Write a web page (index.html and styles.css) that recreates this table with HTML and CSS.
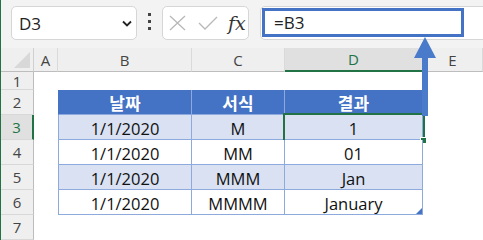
FILE: index.html
```html
<!DOCTYPE html>
<html lang="ko">
<head>
    <meta charset="UTF-8">
    <title>MONTH format</title>
    <link rel="stylesheet" href="styles.css">
</head>
<body>

<div class="app">

    <div class="toolbar">
        <div class="namebox">
            <span>D3</span>
            <svg class="chevron" width="10" height="7" viewBox="0 0 10 7"><polyline points="1,1.5 5,5.5 9,1.5" fill="none" stroke="#222" stroke-width="1.8"/></svg>
        </div>
        <div class="dots"><i></i><i></i><i></i></div>
        <div class="fxbox">
            <svg width="18" height="16" viewBox="0 0 18 16"><path d="M1 1 L16 15 M16 1 L1 15" stroke="#b8b8b8" stroke-width="1.3" fill="none"/></svg>
            <svg width="20" height="16" viewBox="0 0 20 16"><polyline points="1,8 7,14 19,2" stroke="#b8b8b8" stroke-width="1.3" fill="none"/></svg>
            <span class="fx">fx</span>
        </div>
        <div class="formula">
            <span class="formula-text">=B3</span>
        </div>
    </div>

    <div class="sheet">
        <div class="corner"></div>
        <div class="colhead">A</div>
        <div class="colhead">B</div>
        <div class="colhead">C</div>
        <div class="colhead active">D</div>
        <div class="colhead">E</div>

        <div class="rowhead">1</div>
        <div class="blank"></div><div class="blank"></div><div class="blank"></div><div class="blank"></div><div class="blank"></div>

        <div class="rowhead">2</div>
        <div class="blank"></div>
        <div class="cell head first">날짜</div>
        <div class="cell head">서식</div>
        <div class="cell head">결과</div>
        <div class="blank"></div>

        <div class="rowhead active">3</div>
        <div class="blank"></div>
        <div class="cell band first">1/1/2020</div>
        <div class="cell band">M</div>
        <div class="cell band selected">1<span class="sel"></span><span class="handle"></span></div>
        <div class="blank"></div>

        <div class="rowhead">4</div>
        <div class="blank"></div>
        <div class="cell first">1/1/2020</div>
        <div class="cell">MM</div>
        <div class="cell">01</div>
        <div class="blank"></div>

        <div class="rowhead">5</div>
        <div class="blank"></div>
        <div class="cell band first">1/1/2020</div>
        <div class="cell band">MMM</div>
        <div class="cell band">Jan</div>
        <div class="blank"></div>

        <div class="rowhead">6</div>
        <div class="blank"></div>
        <div class="cell first">1/1/2020</div>
        <div class="cell">MMMM</div>
        <div class="cell last">January<span class="resize"></span></div>
        <div class="blank"></div>

        <div class="rowhead">7</div>
        <div class="blank"></div><div class="blank"></div><div class="blank"></div><div class="blank"></div><div class="blank"></div>
    </div>

    <svg class="arrow" width="24" height="82" viewBox="0 0 24 82">
        <polygon points="12,1 1,22 9,22 9,80 15,80 15,22 23,22" fill="#4a7bca"/>
    </svg>

</div>

</body>
</html>
```

FILE: styles.css
```css
html, body {
    margin: 0;
    padding: 0;
    background: #fff;
}

.app {
    position: relative;
    width: 482px;
    height: 240px;
    overflow: hidden;
    border-left: 1px solid #217346;
    font-family: "Open Sans", "Noto Sans", sans-serif;
}

/* formula bar */
.toolbar {
    display: flex;
    align-items: flex-start;
    height: 48px;
    box-sizing: border-box;
    padding-top: 6px;
    background: #f3f3f3;
}

.namebox {
    display: flex;
    align-items: center;
    justify-content: space-between;
    box-sizing: border-box;
    margin-left: 10px;
    width: 126px;
    height: 34px;
    padding: 0 4px 0 7px;
    background: #fff;
    border: 1px solid #d6d6d6;
    border-radius: 5px;
    font-size: 17px;
    color: #222;
}

.dots {
    display: flex;
    flex-direction: column;
    gap: 4px;
    margin: 7px 11px 0 11px;
}

.dots i {
    display: block;
    width: 3px;
    height: 3px;
    background: #444;
}

.fxbox {
    display: flex;
    align-items: center;
    box-sizing: border-box;
    width: 87px;
    height: 34px;
    padding-left: 6px;
    gap: 11px;
    background: #fff;
    border: 1px solid #d6d6d6;
    border-radius: 5px;
}

.fx {
    font-family: "DejaVu Serif", "Liberation Serif", serif;
    font-style: italic;
    font-size: 19px;
    color: #333;
    margin-left: -1px;
}

.formula {
    box-sizing: border-box;
    flex: 1;
    height: 34px;
    margin-left: 11px;
    margin-right: -10px;
    padding: 1px;
    background: #fff;
    border: 1px solid #d6d6d6;
    border-radius: 5px;
}

.formula-text {
    display: flex;
    align-items: center;
    box-sizing: border-box;
    width: 202px;
    height: 29px;
    padding-left: 9px;
    border: 3px solid #4472c4;
    font-size: 17px;
    color: #222;
}

/* grid */
.sheet {
    display: grid;
    grid-template-columns: 33px 24px 134px 93px 138px 1fr;
    grid-template-rows: 24px 18px repeat(6, 25px);
}

.corner {
    position: relative;
    background: #efefef;
    border-right: 1px solid #d0d0d0;
    border-bottom: 1px solid #bdbdbd;
}

.corner::after {
    content: "";
    position: absolute;
    right: 3px;
    bottom: 3px;
    border-style: solid;
    border-width: 0 0 16px 16px;
    border-color: transparent transparent #d8d8d8 transparent;
}

.colhead {
    display: flex;
    align-items: center;
    justify-content: center;
    background: #efefef;
    border-right: 1px solid #dadada;
    border-bottom: 1px solid #bdbdbd;
    font-size: 15px;
    color: #444;
}

.colhead.active {
    background: #e0e0e0;
    color: #217346;
    border-bottom: 2px solid #217346;
}

.rowhead {
    display: flex;
    align-items: center;
    justify-content: center;
    background: #efefef;
    border-right: 1px solid #bdbdbd;
    border-bottom: 1px solid #d8d8d8;
    font-size: 15px;
    color: #444;
}

.rowhead.active {
    background: #e0e0e0;
    color: #217346;
    border-right: 2px solid #217346;
}

.blank {
    background: #fff;
}

.cell {
    position: relative;
    display: flex;
    align-items: center;
    justify-content: center;
    box-sizing: border-box;
    padding-top: 2px;
    background: #fff;
    border-right: 1px solid #8ea9db;
    border-bottom: 1px solid #8ea9db;
    font-size: 16.5px;
    color: #111;
}

.cell.first {
    border-left: 1px solid #8ea9db;
}

.cell.band {
    background: #d9e1f2;
}

.cell.head {
    padding-top: 0;
    background: #4472c4;
    color: #fff;
    font-family: "Noto Sans CJK KR", sans-serif;
    font-weight: 700;
    font-size: 17px;
    border-right-color: #8eaadb;
}

.cell.head.first {
    border-left-color: #4472c4;
}

.sel {
    position: absolute;
    left: -2px;
    top: -2px;
    right: -3px;
    bottom: -3px;
    border: 2px solid #217346;
}

.handle {
    position: absolute;
    right: -5px;
    bottom: -5px;
    width: 5px;
    height: 5px;
    background: #217346;
    border: 1px solid #fff;
}

.resize {
    position: absolute;
    right: 0;
    bottom: 0;
    border-style: solid;
    border-width: 0 0 6px 6px;
    border-color: transparent transparent #4472c4 transparent;
}

.arrow {
    position: absolute;
    left: 412px;
    top: 36px;
}
```
